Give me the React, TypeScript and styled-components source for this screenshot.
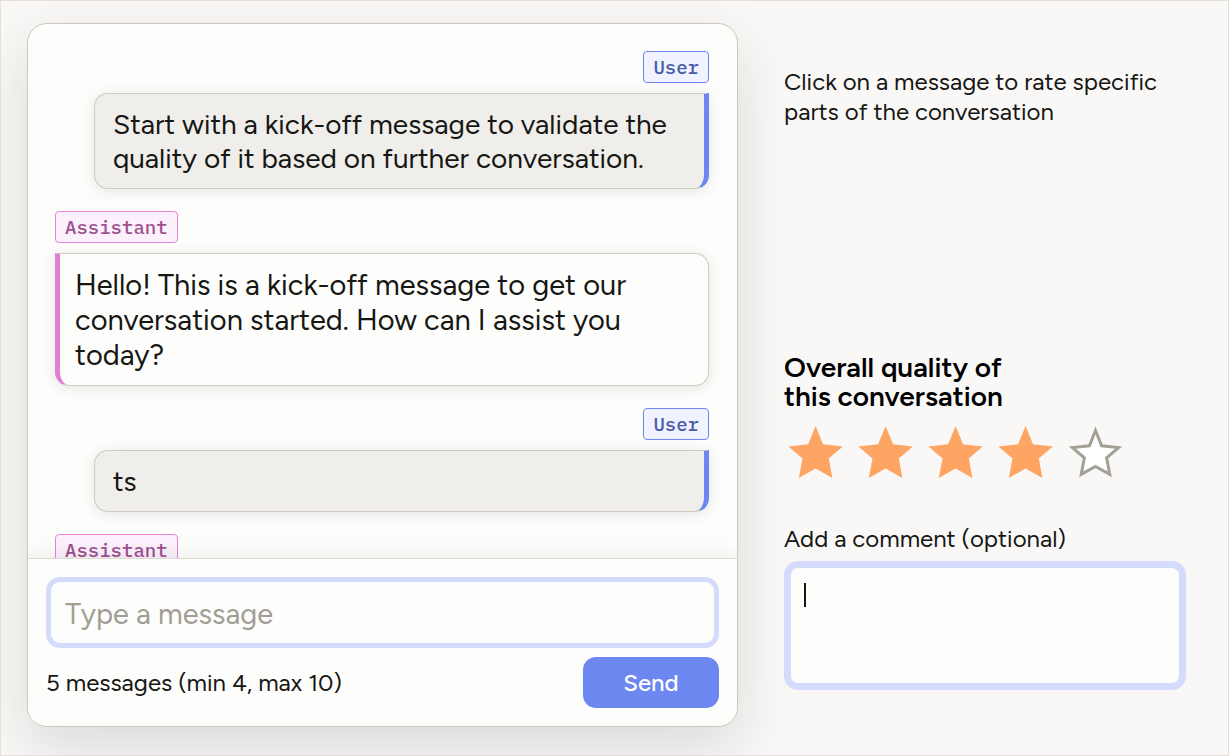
import React, { useState } from "react";
import styled, { createGlobalStyle, css } from "styled-components";

const GlobalStyle = createGlobalStyle`
  *, *::before, *::after { box-sizing: border-box; }
  body { margin: 0; background: #f9f8f7; }
  body, input, textarea, button {
    font-family: Figtree, Lato, "Liberation Sans", sans-serif;
    color: #161613;
  }
`;

type Role = "user" | "assistant";

const Page = styled.main`
  display: grid;
  grid-template-columns: minmax(0, 711fr) minmax(0, 402fr);
  gap: 46px;
  height: 100vh;
  min-height: 640px;
  padding: 22px 42px 28px 26px;
  overflow: hidden;
  border: 1px solid #e2e0d8;
  background: #f9f8f7;
`;

const ChatCard = styled.section`
  display: flex;
  flex-direction: column;
  min-height: 0;
  overflow: hidden;
  border: 1px solid #cbc7bc;
  border-radius: 20px;
  background: #fdfdfb;
  box-shadow: 0 22px 60px rgba(20, 20, 16, 0.13);
`;

const MessageList = styled.div`
  display: flex;
  flex: 1;
  flex-direction: column;
  gap: 22px;
  min-height: 0;
  padding: 27px 28px 0 27px;
  overflow: hidden;
`;

const MessageItem = styled.article<{ $role: Role }>`
  display: flex;
  flex: none;
  flex-direction: column;
  align-items: ${(p) => (p.$role === "user" ? "flex-end" : "flex-start")};
  gap: 10px;
`;

const RoleTag = styled.span<{ $role: Role }>`
  height: 32px;
  padding: 0 9px;
  border: 1px solid ${(p) => (p.$role === "user" ? "#6d87f0" : "#e884d8")};
  border-radius: 4px;
  background: ${(p) => (p.$role === "user" ? "#f0f2ff" : "#fcf0fc")};
  color: ${(p) => (p.$role === "user" ? "#4a5ca8" : "#9c528f")};
  font-family: "IBM Plex Mono", "Liberation Mono", monospace;
  font-size: 19px;
  font-weight: 500;
  line-height: 31px;
`;

const userBubble = css`
  width: calc(100% - 39px);
  padding: 13px 18px;
  border-right: 5px solid #6d87f0;
  border-radius: 14px 0 14px 14px;
  background: #f0eeeb;
  font-size: 28px;
  line-height: 34px;
`;

const assistantBubble = css`
  width: 100%;
  padding: 13px 15px;
  border-left: 5px solid #e27fd4;
  border-radius: 0 14px 14px 14px;
  background: #fdfdfb;
  font-size: 29px;
  line-height: 35px;
`;

const Bubble = styled.p<{ $role: Role }>`
  margin: 0;
  border: 1px solid #cfcbc0;
  box-shadow: 0 2px 14px rgba(20, 20, 16, 0.1);
  ${(p) => (p.$role === "user" ? userBubble : assistantBubble)}
`;

const Composer = styled.form`
  position: relative;
  display: flex;
  flex: none;
  flex-direction: column;
  gap: 9px;
  padding: 18px;
  border-top: 1px solid #dedbd2;
  background: #fdfdfb;
  box-shadow: 0 -2px 20px rgba(20, 20, 16, 0.08);
`;

const MessageInput = styled.input`
  width: 100%;
  height: 71px;
  padding: 2px 14px 0;
  border: 5px solid #d5dbfc;
  border-radius: 14px;
  outline: none;
  background: #fdfdfb;
  font-size: 29px;
  &::placeholder { color: #a29d92; opacity: 1; }
`;

const ComposerRow = styled.div`
  display: flex;
  align-items: center;
  justify-content: space-between;
`;

const Counter = styled.span`
  font-size: 24px;
  line-height: 30px;
`;

const SendButton = styled.button`
  width: 136px;
  height: 51px;
  border: 0;
  border-radius: 13px;
  background: #6d87f0;
  color: #fff;
  font-size: 24px;
  font-weight: 500;
  cursor: pointer;
`;

const RatingPanel = styled.aside`
  display: flex;
  flex-direction: column;
  min-width: 0;
  padding: 44px 0 37px;
`;

const Hint = styled.p`
  margin: 0 0 auto;
  font-size: 24px;
  line-height: 30px;
`;

const PanelTitle = styled.h2`
  max-width: 260px;
  margin: 0;
  color: #000;
  font-size: 28px;
  font-weight: 600;
  line-height: 29px;
`;

const Stars = styled.div`
  display: flex;
  gap: 15px;
  margin: 15px 0 45px 4px;
`;

const StarLabel = styled.label`
  position: relative;
  display: block;
  width: 55px;
  height: 53px;
  cursor: pointer;
`;

const StarInput = styled.input`
  position: absolute;
  inset: 0;
  margin: 0;
  opacity: 0;
`;

const StarIcon = styled.svg`
  display: block;
  width: 100%;
  height: 100%;
`;

const CommentLabel = styled.label`
  margin-bottom: 7px;
  font-size: 24px;
  line-height: 30px;
`;

const CommentField = styled.div`
  position: relative;
  display: flex;
`;

const CommentInput = styled.textarea`
  width: 100%;
  height: 129px;
  padding: 12px 14px;
  border: 7px solid #d5dbfc;
  border-radius: 14px;
  outline: none;
  background: #fdfdfb;
  font-size: 24px;
  line-height: 30px;
  caret-color: transparent;
  resize: none;
`;

const Caret = styled.span`
  position: absolute;
  top: 22px;
  left: 20px;
  width: 2px;
  height: 24px;
  background: #161613;
`;

const messages: { role: Role; text?: string }[] = [
  {
    role: "user",
    text: "Start with a kick-off message to validate the quality of it based on further conversation.",
  },
  {
    role: "assistant",
    text: "Hello! This is a kick-off message to get our conversation started. How can I assist you today?",
  },
  { role: "user", text: "ts" },
  { role: "assistant" },
];

const STAR = "M27.6 0 L35 18.2 L54.8 20.4 L40.8 32.4 L44.4 52 L27.6 42.4 L10.8 52 L14.5 32.4 L0.4 20.4 L20.2 18.2 Z";
const STAR_OUTLINE = "M27.5 4.5 L33.6 19.8 L50.6 21.6 L38.6 31.8 L41.8 48.4 L27.5 40.4 L13.2 48.4 L16.4 31.8 L4.4 21.6 L21.4 19.8 Z";

function Star({ filled }: { filled: boolean }) {
  return (
    <StarIcon viewBox="0 0 55 53" aria-hidden="true">
      {filled ? (
        <path d={STAR} fill="#ffa563" />
      ) : (
        <path d={STAR_OUTLINE} fill="#fff" stroke="#a3a094" strokeWidth="3" />
      )}
    </StarIcon>
  );
}

export default function App() {
  const [rating, setRating] = useState(4);

  return (
    <>
      <GlobalStyle />
      <Page>
        <ChatCard>
          <MessageList>
            {messages.map((m, i) => (
              <MessageItem key={i} $role={m.role}>
                <RoleTag $role={m.role}>{m.role === "user" ? "User" : "Assistant"}</RoleTag>
                {m.text && <Bubble $role={m.role}>{m.text}</Bubble>}
              </MessageItem>
            ))}
          </MessageList>
          <Composer onSubmit={(e) => e.preventDefault()}>
            <MessageInput type="text" placeholder="Type a message" aria-label="Type a message" />
            <ComposerRow>
              <Counter>5 messages (min 4, max 10)</Counter>
              <SendButton type="submit">Send</SendButton>
            </ComposerRow>
          </Composer>
        </ChatCard>
        <RatingPanel>
          <Hint>Click on a message to rate specific parts of the conversation</Hint>
          <PanelTitle id="quality">Overall quality of this conversation</PanelTitle>
          <Stars role="radiogroup" aria-labelledby="quality">
            {[1, 2, 3, 4, 5].map((n) => (
              <StarLabel key={n}>
                <StarInput
                  type="radio"
                  name="rating"
                  value={n}
                  aria-label={`${n}`}
                  checked={rating === n}
                  onChange={() => setRating(n)}
                />
                <Star filled={n <= rating} />
              </StarLabel>
            ))}
          </Stars>
          <CommentLabel htmlFor="comment">Add a comment (optional)</CommentLabel>
          <CommentField>
            <CommentInput id="comment" />
            <Caret />
          </CommentField>
        </RatingPanel>
      </Page>
    </>
  );
}
